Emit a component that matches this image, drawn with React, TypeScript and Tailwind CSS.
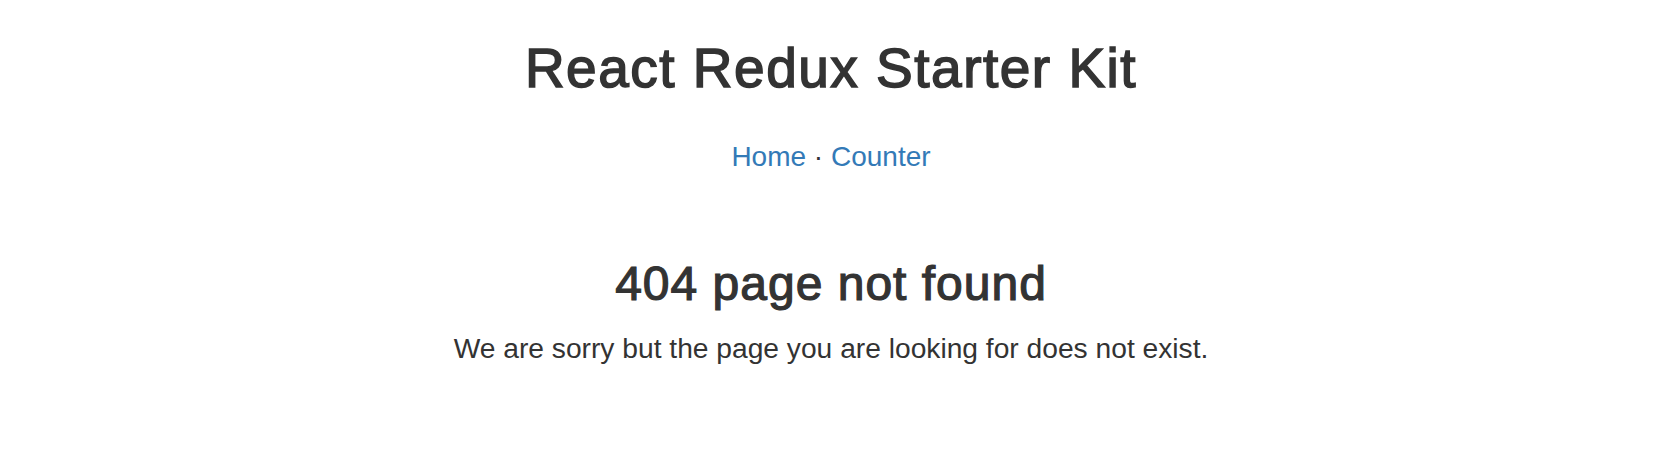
import React from "react";

const NavLink = ({ children }: { children: React.ReactNode }) => (
  <a href="#" className="text-[#337ab7] no-underline">
    {children}
  </a>
);

export default function App() {
  return (
    <div className="min-h-[453px] bg-white font-['Liberation_Sans',Arial,sans-serif] text-[#333] text-center">
      <div className="flex flex-col items-center pt-[41px] pr-[4px]">
        {/* medium weight: regular face thickened with a stroke */}
        <h1 className="text-[55px] leading-none font-normal tracking-[1.5px] [-webkit-text-stroke:1.5px_#333]">
          React Redux Starter Kit
        </h1>
        <nav className="mt-[47px] text-[28px] leading-none">
          <NavLink>Home</NavLink>
          {" · "}
          <NavLink>Counter</NavLink>
        </nav>

        <h2 className="mt-[89px] text-[48px] leading-none font-normal tracking-[1px] [-webkit-text-stroke:1.2px_#333]">
          404 page not found
        </h2>
        <p className="mt-[26px] text-[28.2px] leading-none">
          We are sorry but the page you are looking for does not exist.
        </p>
      </div>
    </div>
  );
}
